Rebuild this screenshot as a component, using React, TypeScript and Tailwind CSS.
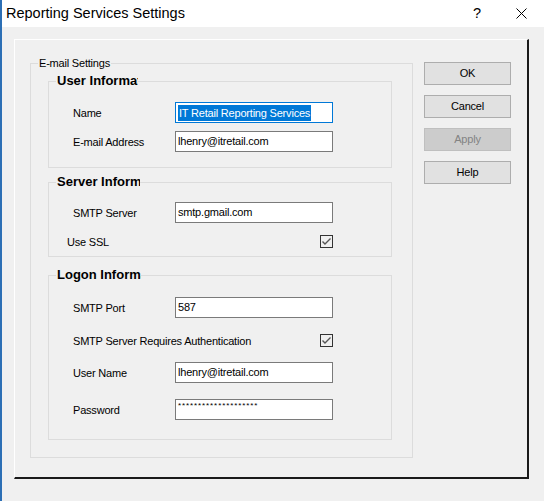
import React from "react";

const ui = { fontFamily: '"Liberation Sans", Arial, sans-serif' };

function Field({ label, value, focused }: { label: string; value: string; focused?: boolean }) {
  return (
    <div className="flex h-[21px] items-center">
      <span className="w-[102px] pt-[1px] text-[11px] tracking-[-0.2px] text-black">{label}</span>
      <div
        className={`flex h-[21px] w-[158px] items-center bg-white pl-[2px] text-[11px] tracking-[-0.2px] text-black border ${
          focused ? "border-[#0078d7]" : "border-[#7a7a7a]"
        }`}
      >
        {focused ? <span className="bg-[#0078d7] px-[1px] leading-[16px] text-white">{value}</span> : value}
      </div>
    </div>
  );
}

function Check({ label, className }: { label: string; className?: string }) {
  return (
    <div className={`flex h-[21px] items-center justify-between ${className ?? ""}`}>
      <span className="pt-[1px] text-[11px] tracking-[-0.2px] text-black">{label}</span>
      <div className="flex h-[13px] w-[13px] items-center justify-center border border-[#333]">
        <svg width="11" height="11" viewBox="0 0 11 11">
          <path d="M1.5 5.5 L4 8 L9.5 2.5" fill="none" stroke="#555" strokeWidth="1.4" />
        </svg>
      </div>
    </div>
  );
}

function Group({ title, width, className, children }: { title: string; width: string; className: string; children: React.ReactNode }) {
  return (
    <fieldset className={`ml-[17px] w-[344px] border border-[#dcdcdc] pl-[24px] pr-[58px] ${className}`}>
      <legend
        className={`ml-[-17px] h-[16px] overflow-hidden whitespace-nowrap pl-[1px] text-[13px] font-bold leading-[16px] text-black ${width}`}
      >
        {title}
      </legend>
      {children}
    </fieldset>
  );
}

function Btn({ children, disabled }: { children: React.ReactNode; disabled?: boolean }) {
  return (
    <button
      className={`h-[23px] w-[87px] border text-[11px] tracking-[-0.2px] ${
        disabled ? "border-[#bfbfbf] bg-[#cccccc] text-[#838383]" : "border-[#adadad] bg-[#e1e1e1] text-black"
      }`}
    >
      {children}
    </button>
  );
}

export default function App() {
  return (
    <div className="flex h-[501px] w-[544px] bg-[#f0f0f0]" style={ui}>
      <div className="w-[2px] bg-[#2c6fb5]" />
      <div className="flex flex-1 flex-col">
        {/* Title bar */}
        <div className="flex h-[27px] items-center bg-white pl-[4px] text-[14.5px] text-black">
          <span className="flex-1">Reporting Services Settings</span>
          <span className="mr-[35px]">?</span>
          <svg width="11" height="11" viewBox="0 0 11 11" className="mr-[17px]">
            <path d="M0.5 0.5 L10.5 10.5 M10.5 0.5 L0.5 10.5" stroke="#000" strokeWidth="1" />
          </svg>
        </div>

        {/* Property page */}
        <div className="ml-[12px] mt-[12px] flex h-[440px] w-[515px] border-l border-t border-white border-r-2 border-b-2 border-r-[#1a1a1a] border-b-[#1a1a1a] pl-[15px]">
          <fieldset className="mt-[16px] h-[402px] w-[383px] border border-[#dcdcdc]">
            <legend className="ml-[7px] h-[14px] px-[1px] text-[11px] leading-[14px] tracking-[-0.2px] text-black">
              E-mail Settings
            </legend>

            <Group title="User Information" width="w-[82px]" className="mt-[3px] pb-[15px]">
              <div className="mt-[13px]">
                <Field label="Name" value="IT Retail Reporting Services" focused />
              </div>
              <div className="mt-[8px]">
                <Field label="E-mail Address" value="lhenry@itretail.com" />
              </div>
            </Group>

            <Group title="Server Information" width="w-[84px]" className="mt-[6px] pb-[4px]">
              <div className="mt-[12px]">
                <Field label="SMTP Server" value="smtp.gmail.com" />
              </div>
              <Check label="Use SSL" className="mt-[8px] ml-[-6px]" />
            </Group>

            <Group title="Logon Information" width="w-[85px]" className="mt-[10px] pb-[19px]">
              <div className="mt-[14px]">
                <Field label="SMTP Port" value="587" />
              </div>
              <Check label="SMTP Server Requires Authentication" className="mt-[12px]" />
              <div className="mt-[11px]">
                <Field label="User Name" value="lhenry@itretail.com" />
              </div>
              <div className="mt-[16px] flex h-[21px] items-center">
                <span className="w-[102px] pt-[1px] text-[11px] tracking-[-0.2px] text-black">Password</span>
                <div className="flex h-[21px] w-[158px] items-start border border-[#7a7a7a] bg-white pl-[2px] pt-[2px] text-[8px] leading-[8px] tracking-[0.9px] text-black">
                  ********************
                </div>
              </div>
            </Group>
          </fieldset>

          <div className="ml-[11px] mt-[22px] flex flex-col gap-[10px]">
            <Btn>OK</Btn>
            <Btn>Cancel</Btn>
            <Btn disabled>Apply</Btn>
            <Btn>Help</Btn>
          </div>
        </div>
      </div>
    </div>
  );
}
